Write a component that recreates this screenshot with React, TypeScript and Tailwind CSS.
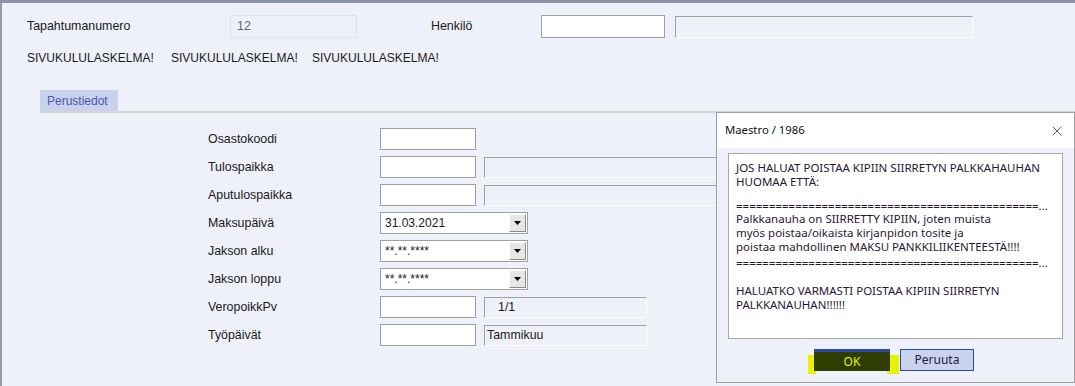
import { X } from "lucide-react"

const rows: { label: string; kind: "input" | "input2" | "select" | "info"; value?: string; info?: string; infoPad?: string }[] = [
  { label: "Osastokoodi", kind: "input" },
  { label: "Tulospaikka", kind: "input2" },
  { label: "Aputulospaikka", kind: "input2" },
  { label: "Maksupäivä", kind: "select", value: "31.03.2021" },
  { label: "Jakson alku", kind: "select", value: "**.**.****" },
  { label: "Jakson loppu", kind: "select", value: "**.**.****" },
  { label: "VeropoikkPv", kind: "info", info: "1/1", infoPad: "pl-[13px]" },
  { label: "Työpäivät", kind: "info", info: "Tammikuu", infoPad: "pl-[2px]" },
]

const rule = "=".repeat(46) + "..."

// each line with its own height, blank lines in the message are shorter
const dialogLines: { text: string; h: string }[] = [
  { text: "JOS HALUAT POISTAA KIPIIN SIIRRETYN PALKKAHAUHAN", h: "h-[14px] leading-[14px]" },
  { text: "HUOMAA ETTÄ:", h: "h-[14px] leading-[14px]" },
  { text: "", h: "h-[10px]" },
  { text: rule, h: "h-[13px] leading-[13px]" },
  { text: "Palkkanauha on SIIRRETTY KIPIIN, joten muista", h: "h-[14px] leading-[14px]" },
  { text: "myös poistaa/oikaista kirjanpidon tosite ja", h: "h-[14px] leading-[14px]" },
  { text: "poistaa mahdollinen MAKSU PANKKILIIKENTEESTÄ!!!!", h: "h-[14px] leading-[14px]" },
  { text: rule, h: "h-[16px] leading-[18px]" },
  { text: "", h: "h-[14px]" },
  { text: "HALUATKO VARMASTI POISTAA KIPIIN SIIRRETYN", h: "h-[14px] leading-[14px]" },
  { text: "PALKKANAUHAN!!!!!!", h: "h-[14px] leading-[14px]" },
]

function Select({ value }: { value: string }) {
  return (
    <div className="flex h-[22px] w-[148px] items-center border border-[#a0a0a0] bg-white">
      <span className="flex-1 pl-[4px] text-[12px] leading-none">{value}</span>
      <div className="mr-[1px] flex h-[18px] w-[17px] items-center justify-center border border-t-white border-l-white border-r-[#8a8a8a] border-b-[#8a8a8a] bg-[#e6e6e6]">
        <svg width="7" height="4" viewBox="0 0 7 4">
          <path d="M0 0 H7 L3.5 4 Z" fill="#000" />
        </svg>
      </div>
    </div>
  )
}

export default function App() {
  return (
    <div
      className="relative h-[386px] w-[1075px] overflow-hidden border-t-[3px] border-l-2 border-t-[#8d95a6] border-l-[#9a9a9a] bg-[#eef1f9] text-[#1a1a1a]"
      style={{ fontFamily: '"Liberation Sans", Arial, sans-serif' }}
    >
      <div className="flex flex-col pl-[25px] pt-[12px]">
        {/* top row */}
        <div className="flex items-center text-[12.4px]">
          <span className="w-[203px]">Tapahtumanumero</span>
          <div className="flex h-[23px] w-[127px] items-center border border-[#dde1ea] bg-[#eef1f9] pl-[6px] text-[#666]">12</div>
          <span className="ml-[74px] w-[110px]">Henkilö</span>
          <div className="h-[23px] w-[124px] border border-[#a0a0a0] bg-white" />
          <div className="ml-[10px] h-[22px] w-[298px] border border-t-[#a0a0a0] border-l-[#a0a0a0] border-r-white border-b-white" />
        </div>

        <div className="mt-[13px] flex text-[12px] leading-[14px]">
          <span className="w-[144px]">SIVUKULULASKELMA!</span>
          <span className="w-[141px]">SIVUKULULASKELMA!</span>
          <span>SIVUKULULASKELMA!</span>
        </div>

        {/* tabs */}
        <div className="ml-[13px] mt-[25px] flex border-b-2 border-[#d5d5d5]">
          <div className="flex h-[21px] w-[78px] items-center bg-[#c8d2ee] pl-[7px] text-[12px] text-[#4b5aa8]">Perustiedot</div>
        </div>

        {/* form */}
        <div className="ml-[181px] mt-[15px] flex flex-col gap-[6px]">
          {rows.map((r) => (
            <div key={r.label} className="flex h-[22px] items-center text-[12.4px]">
              <span className="w-[172px]">{r.label}</span>
              {r.kind === "select" ? (
                <Select value={r.value!} />
              ) : (
                <div className="h-[22px] w-[96px] border border-[#a0a0a0] bg-white" />
              )}
              {r.kind === "input2" && (
                <div className="ml-[8px] h-[21px] w-[300px] border border-t-[#a0a0a0] border-l-[#a0a0a0] border-r-white border-b-white" />
              )}
              {r.kind === "info" && (
                <div
                  className={`ml-[8px] flex h-[21px] w-[163px] items-center border border-t-[#a0a0a0] border-l-[#a0a0a0] border-r-white border-b-white ${r.infoPad}`}
                >
                  {r.info}
                </div>
              )}
            </div>
          ))}
        </div>
      </div>

      {/* dialog */}
      <div
        className="absolute left-[714px] top-[109px] flex h-[271px] w-[359px] flex-col border border-[#a0a0a0] bg-[#eef1f9]"
        style={{ fontFamily: '"Noto Sans", "Open Sans", sans-serif' }}
      >
        <div className="flex h-[35px] items-center justify-between bg-white pl-[8px] pr-[9px]">
          <span className="text-[11.3px] text-[#111]">Maestro / 1986</span>
          <X size={16} strokeWidth={1.1} className="text-[#222]" />
        </div>
        <div className="mx-[11px] mt-[5px] h-[186px] border border-[#a8a8a8] bg-white px-[7px] pt-[7px]">
          {dialogLines.map((l, i) => (
            <div key={i} className={`${l.h} whitespace-nowrap text-[11.5px] text-[#2a1735]`}>
              {l.text}
            </div>
          ))}
        </div>
        <div className="mt-[10px] flex pl-[97px]">
          <div className="relative h-[22px] w-[76px]">
            <div className="absolute left-[-6px] top-[6px] h-[19px] w-[8px] bg-[#e9f000]" />
            <div className="absolute right-[-9px] top-[6px] h-[19px] w-[12px] bg-[#e9f000]" />
            <div className="relative flex h-[22px] w-[76px] items-center justify-center border-t-[3px] border-[#2c48a8] bg-[#2f3d00] text-[12px] text-[#e8f000]">
              OK
            </div>
          </div>
          <div className="ml-[10px] flex h-[22px] w-[74px] items-center justify-center border border-[#2c48a8] bg-[#c9d3ee] text-[12px] text-[#1c1c3c]">
            Peruuta
          </div>
        </div>
      </div>
    </div>
  )
}
